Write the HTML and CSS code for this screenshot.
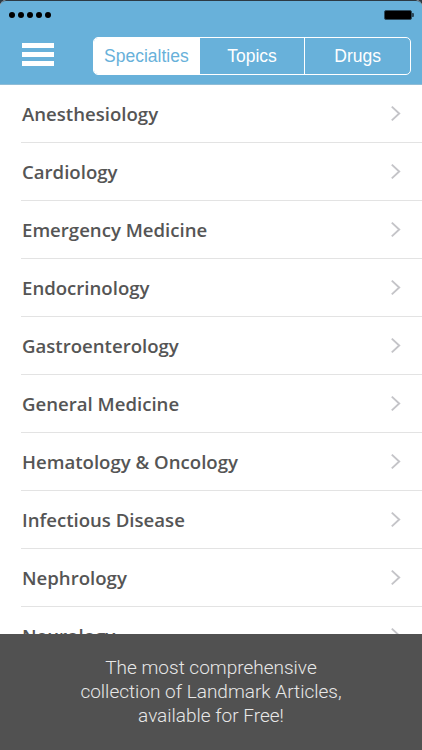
FILE: index.html
```html
<!DOCTYPE html>
<html>
<head>
<meta charset="utf-8">
<link rel="stylesheet" href="styles.css">
</head>
<body>
<div class="screen">
  <header class="header">
    <div class="status">
      <div class="dots"><span></span><span></span><span></span><span></span><span></span></div>
      <div class="battery"><div class="cell"></div><div class="nub"></div></div>
    </div>
    <div class="navbar">
      <div class="menu"><span></span><span></span><span></span></div>
      <div class="segments">
        <div class="seg active">Specialties</div>
        <div class="seg">Topics</div>
        <div class="seg">Drugs</div>
      </div>
    </div>
  </header>
  <ul class="list">
    <li class="row"><span>Anesthesiology</span><svg class="chev" viewBox="0 0 10 16"><path d="M1.5 1.5 L8.5 8 L1.5 14.5"/></svg></li>
    <li class="row"><span>Cardiology</span><svg class="chev" viewBox="0 0 10 16"><path d="M1.5 1.5 L8.5 8 L1.5 14.5"/></svg></li>
    <li class="row"><span>Emergency Medicine</span><svg class="chev" viewBox="0 0 10 16"><path d="M1.5 1.5 L8.5 8 L1.5 14.5"/></svg></li>
    <li class="row"><span>Endocrinology</span><svg class="chev" viewBox="0 0 10 16"><path d="M1.5 1.5 L8.5 8 L1.5 14.5"/></svg></li>
    <li class="row"><span>Gastroenterology</span><svg class="chev" viewBox="0 0 10 16"><path d="M1.5 1.5 L8.5 8 L1.5 14.5"/></svg></li>
    <li class="row"><span>General Medicine</span><svg class="chev" viewBox="0 0 10 16"><path d="M1.5 1.5 L8.5 8 L1.5 14.5"/></svg></li>
    <li class="row"><span>Hematology &amp; Oncology</span><svg class="chev" viewBox="0 0 10 16"><path d="M1.5 1.5 L8.5 8 L1.5 14.5"/></svg></li>
    <li class="row"><span>Infectious Disease</span><svg class="chev" viewBox="0 0 10 16"><path d="M1.5 1.5 L8.5 8 L1.5 14.5"/></svg></li>
    <li class="row"><span>Nephrology</span><svg class="chev" viewBox="0 0 10 16"><path d="M1.5 1.5 L8.5 8 L1.5 14.5"/></svg></li>
    <li class="row"><span>Neurology</span><svg class="chev" viewBox="0 0 10 16"><path d="M1.5 1.5 L8.5 8 L1.5 14.5"/></svg></li>
  </ul>
  <div class="banner">
    <p>The most comprehensive<br>collection of Landmark Articles,<br>available for Free!</p>
  </div>
</div>
</body>
</html>
```
FILE: styles.css
```css
* { box-sizing: border-box; }
html, body {
  margin: 0;
  padding: 0;
  background: #2c3a44;
  width: 422px;
  height: 750px;
  overflow: hidden;
}
.screen {
  position: relative;
  width: 422px;
  height: 750px;
  background: #ffffff;
  border-radius: 6px 6px 0 0;
  overflow: hidden;
  font-family: "Open Sans", "Liberation Sans", sans-serif;
}
.header {
  background: #68b1da;
  height: 85px;
  border-top: 1px solid #2c3a44;
  border-bottom: 1px solid #8fbcd6;
  border-radius: 6px 6px 0 0;
  display: flex;
  flex-direction: column;
}
.status {
  height: 27px;
  display: flex;
  align-items: center;
  justify-content: space-between;
  padding: 0 8px 0 9px;
}
.dots { display: flex; gap: 3px; margin-top: 1px; }
.dots span {
  width: 6px;
  height: 6px;
  border-radius: 50%;
  background: #000;
}
.battery { display: flex; align-items: center; margin-top: 1px; }
.battery .cell {
  width: 28px;
  height: 10px;
  border: 1px solid #2d4a5c;
  border-radius: 2px;
  background: #000;
}
.battery .nub {
  width: 2px;
  height: 4px;
  background: #2d4a5c;
  border-radius: 0 1px 1px 0;
}
.navbar {
  flex: 1;
  display: flex;
  align-items: flex-start;
  padding: 8px 11px 0 22px;
}
.menu {
  width: 32px;
  display: flex;
  flex-direction: column;
  gap: 4px;
  margin-top: 7px;
}
.menu span {
  display: block;
  height: 5px;
  background: #ffffff;
}
.segments {
  margin-left: auto;
  width: 318px;
  height: 38px;
  display: flex;
  border: 1.5px solid #ffffff;
  border-radius: 5px;
  overflow: hidden;
  margin-top: 1px;
}
.seg {
  flex: 1;
  display: flex;
  align-items: center;
  justify-content: center;
  font-family: "Liberation Sans", Arial, sans-serif;
  font-size: 17.5px;
  color: #ffffff;
}
.seg + .seg { border-left: 1.5px solid #ffffff; }
.seg.active {
  background: #ffffff;
  color: #68b1da;
}
.list {
  list-style: none;
  margin: 0;
  padding: 0 0 0 21px;
}
.row {
  height: 58px;
  display: flex;
  align-items: center;
  justify-content: space-between;
  border-bottom: 1px solid #e3e3e3;
  padding: 0 21px 0 1px;
  font-size: 18.6px;
  font-weight: 600;
  color: #555555;
}
.row span { margin-top: 0; }
.chev {
  width: 11px;
  height: 17px;
  fill: none;
  stroke: #c4c4c8;
  stroke-width: 1.8;
}
.banner {
  position: absolute;
  left: 0;
  right: 0;
  bottom: 0;
  height: 116px;
  background: #515151;
  display: flex;
  align-items: center;
  justify-content: center;
}
.banner p {
  margin: 0 0 0 0;
  text-align: center;
  font-family: Roboto, "Liberation Sans", Arial, sans-serif;
  font-weight: 300;
  font-size: 19px;
  line-height: 24px;
  color: #e8e8e8;
}
```
